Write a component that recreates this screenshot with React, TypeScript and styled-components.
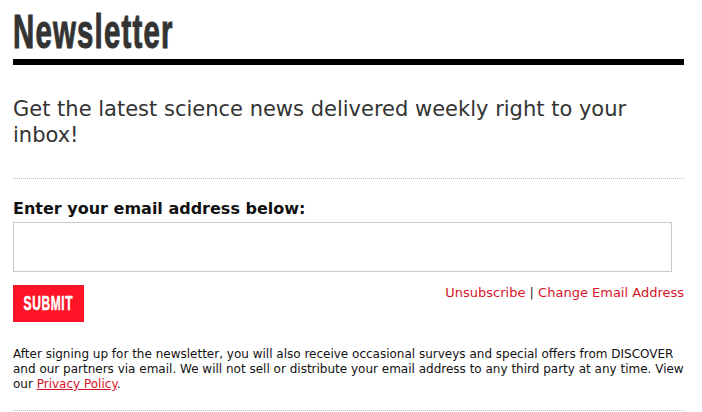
import styled, {createGlobalStyle} from "styled-components"

const GlobalStyle = createGlobalStyle`
    body {
        margin: 0;
        background: #fff;
        font-family: "DejaVu Sans", Verdana, sans-serif;
        color: #222;
    }
`;

const Page = styled.div`
    width: 671px;
    padding: 7px 0 0 13px;
`;

const Title = styled.h1`
    margin: 0;
    padding-bottom: 3px;
    border-bottom: 6px solid #000;
    font-family: "Liberation Sans Narrow", "Liberation Sans", Arial, sans-serif;
    font-weight: bold;
    font-size: 49px;
    line-height: 49px;
    color: #333;
    span {
        display: inline-block;
        transform: scaleX(0.6);
        transform-origin: left center;
        letter-spacing: 2px;
        -webkit-text-stroke: 1.1px #333;
    }
`;

const Intro = styled.p`
    margin: 31px 0 0;
    padding-bottom: 30px;
    border-bottom: 1px dotted #bbb;
    font-size: 21px;
    line-height: 26px;
    color: #333;
`;

const Label = styled.label`
    display: block;
    margin-top: 20px;
    font-weight: bold;
    font-size: 16px;
    line-height: 20px;
    color: #111;
`;

const EmailInput = styled.input`
    display: block;
    box-sizing: border-box;
    width: 659px;
    height: 50px;
    margin-top: 3px;
    border: 1px solid #c9c9c9;
    border-radius: 0;
    outline: none;
    padding: 0 10px;
    font-size: 16px;
`;

const Actions = styled.div`
    display: flex;
    justify-content: space-between;
    align-items: flex-start;
    margin-top: 13px;
`;

const SubmitButton = styled.button`
    display: flex;
    align-items: center;
    justify-content: center;
    width: 71px;
    height: 37px;
    padding: 0;
    border: none;
    background: #fe1426;
    color: #fff;
    font-family: "Liberation Sans Narrow", "Liberation Sans", Arial, sans-serif;
    font-weight: bold;
    font-size: 20px;
    cursor: pointer;
    span {
        display: inline-block;
        flex-shrink: 0;
        transform: scaleX(0.6);
        letter-spacing: 1px;
        -webkit-text-stroke: 0.5px #fff;
    }
`;

const Links = styled.div`
    font-size: 13px;
    line-height: 16px;
    color: #333;
    a {
        color: #d81428;
        text-decoration: none;
    }
`;

const Disclaimer = styled.p`
    margin: 25px 0 0;
    padding-bottom: 18px;
    border-bottom: 1px dotted #bbb;
    font-size: 12px;
    line-height: 15px;
    color: #111;
    a {
        color: #d81428;
        text-decoration: underline;
    }
`;

const App = () => {
    return (
        <Page>
            <GlobalStyle />
            <Title><span>Newsletter</span></Title>
            <Intro>Get the latest science news delivered weekly right to your inbox!</Intro>
            <Label htmlFor="email">Enter your email address below:</Label>
            <EmailInput id="email" type="email" />
            <Actions>
                <SubmitButton><span>SUBMIT</span></SubmitButton>
                <Links>
                    <a href="#">Unsubscribe</a> | <a href="#">Change Email Address</a>
                </Links>
            </Actions>
            <Disclaimer>
                After signing up for the newsletter, you will also receive occasional surveys and special offers from DISCOVER
                and our partners via email. We will not sell or distribute your email address to any third party at any time. View
                our <a href="#">Privacy Policy</a>.
            </Disclaimer>
        </Page>
    )
}

export default App
